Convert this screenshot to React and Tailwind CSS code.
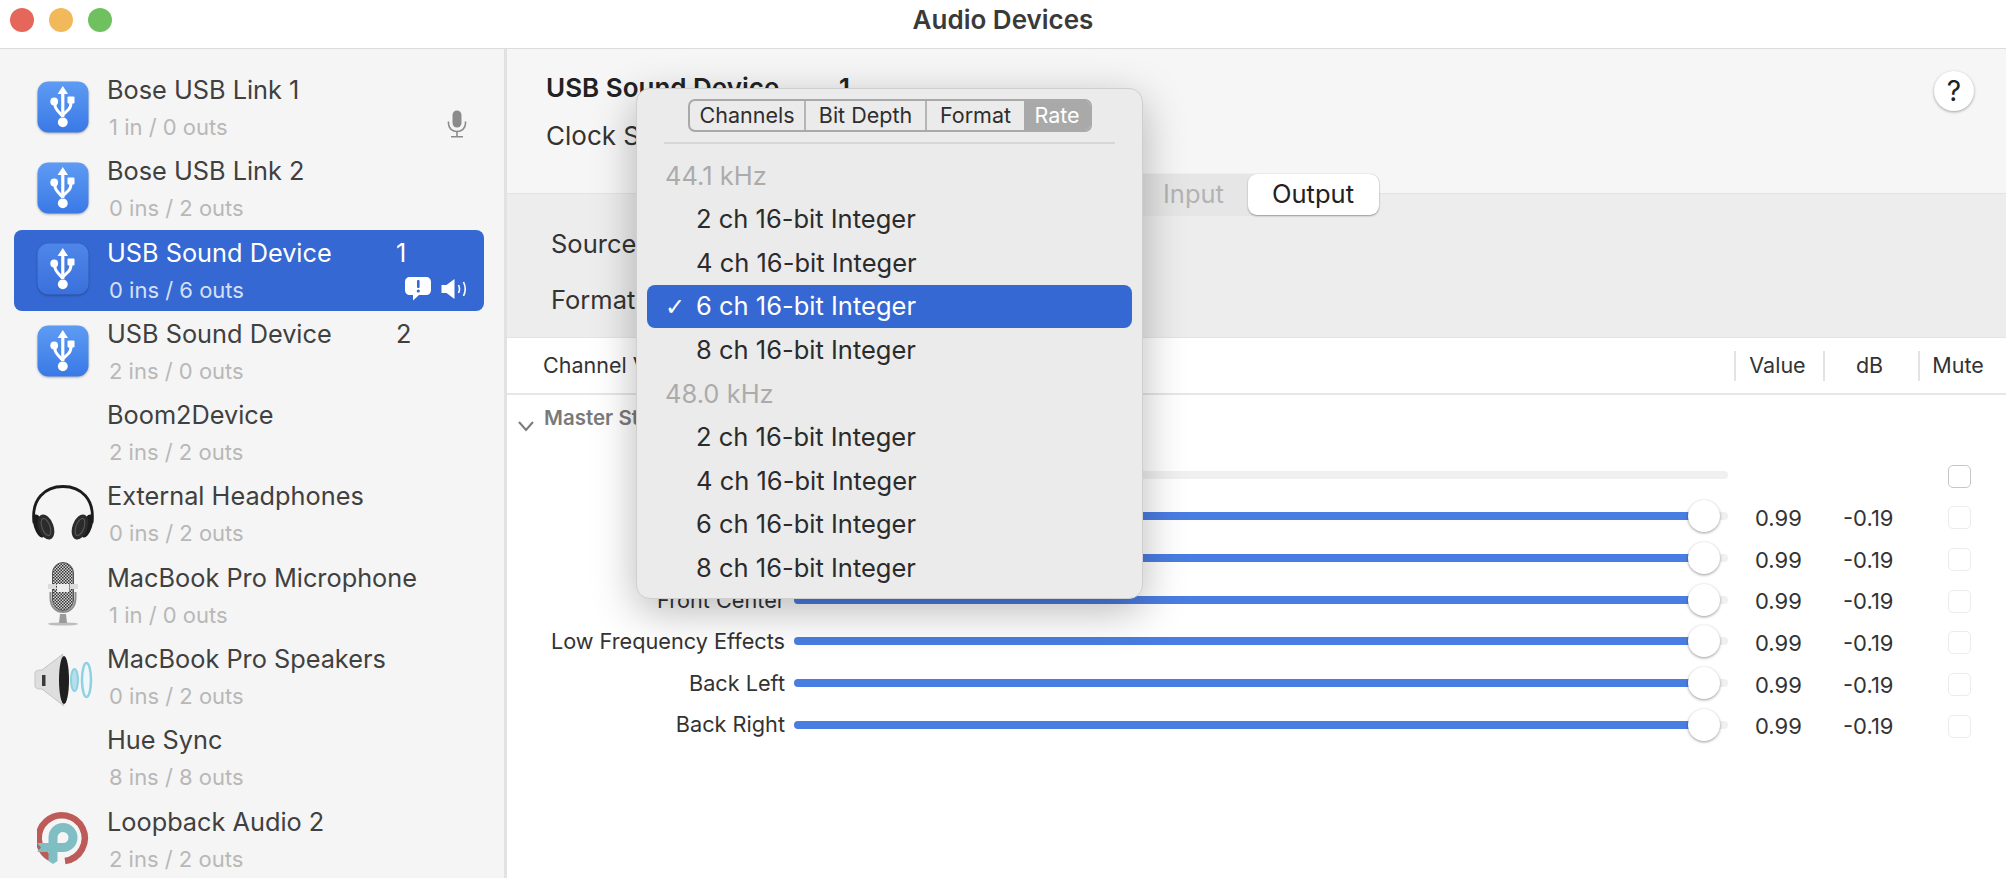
import { useId } from 'react'

const DEVICES = [
  { name: 'Bose USB Link 1', sub: '1 in / 0 outs', icon: 'usb', mic: true },
  { name: 'Bose USB Link 2', sub: '0 ins / 2 outs', icon: 'usb' },
  { name: 'USB Sound Device', sub: '0 ins / 6 outs', icon: 'usb', num: '1', selected: true },
  { name: 'USB Sound Device', sub: '2 ins / 0 outs', icon: 'usb', num: '2' },
  { name: 'Boom2Device', sub: '2 ins / 2 outs' },
  { name: 'External Headphones', sub: '0 ins / 2 outs', icon: 'headphones' },
  { name: 'MacBook Pro Microphone', sub: '1 in / 0 outs', icon: 'bigmic' },
  { name: 'MacBook Pro Speakers', sub: '0 ins / 2 outs', icon: 'speaker' },
  { name: 'Hue Sync', sub: '8 ins / 8 outs' },
  { name: 'Loopback Audio 2', sub: '2 ins / 2 outs', icon: 'loopback' },
]

const CHANNELS = ['Front Left', 'Front Right', 'Front Center', 'Low Frequency Effects', 'Back Left', 'Back Right']
const TABS = ['Channels', 'Bit Depth', 'Format', 'Rate']
const RATES = [
  { rate: '44.1 kHz', items: ['2 ch 16-bit Integer', '4 ch 16-bit Integer', '6 ch 16-bit Integer', '8 ch 16-bit Integer'], checked: 2 },
  { rate: '48.0 kHz', items: ['2 ch 16-bit Integer', '4 ch 16-bit Integer', '6 ch 16-bit Integer', '8 ch 16-bit Integer'] },
]

function UsbIcon({ selected }) {
  const id = useId()
  return (
    <svg width="52" height="52" viewBox="0 0 52 52" className="drop-shadow-[0_1px_1px_rgba(0,0,0,0.3)]">
      <defs>
        <linearGradient id={id} x1="0" y1="0" x2="0" y2="1">
          <stop offset="0" stopColor={selected ? '#4f86e8' : '#5e9bf3'} />
          <stop offset="1" stopColor={selected ? '#3a70dc' : '#3a79e6'} />
        </linearGradient>
      </defs>
      <rect x="0.5" y="0.5" width="51" height="51" rx="11" fill={`url(#${id})`} />
      <path d="M25.8 5 L31 13 H27.4 V36 H24.2 V13 H20.6 Z" fill="#fff" />
      <circle cx="25.8" cy="41.3" r="4.9" fill="#fff" />
      <circle cx="17.2" cy="20.5" r="3.9" fill="#fff" />
      <rect x="30.5" y="15.5" width="7" height="7" rx="1" fill="#fff" />
      <path d="M17.6 22 Q18 27 20.5 29.5 L25.8 35.5 M34 21 Q34 26 31.5 28.5 L25.8 34" stroke="#fff" strokeWidth="3" fill="none" />
    </svg>
  )
}

function HeadphonesIcon() {
  return (
    <svg width="64" height="56" viewBox="0 0 64 56">
      <path d="M3 38 C0 14 14 1.5 32 1.5 C50 1.5 64 14 61 38" fill="none" stroke="#1b1b1b" strokeWidth="2.8" />
      <ellipse cx="8" cy="41" rx="5" ry="12" transform="rotate(-18 8 41)" fill="#1c1c1c" />
      <ellipse cx="56" cy="41" rx="5" ry="12" transform="rotate(18 56 41)" fill="#1c1c1c" />
      <ellipse cx="15" cy="42" rx="7.5" ry="13" transform="rotate(-20 15 42)" fill="#2b2b2b" />
      <ellipse cx="49" cy="42" rx="7.5" ry="13" transform="rotate(20 49 42)" fill="#2b2b2b" />
      <ellipse cx="15" cy="42" rx="4" ry="9" transform="rotate(-20 15 42)" fill="none" stroke="#5c5c5c" strokeWidth="1" />
      <ellipse cx="49" cy="42" rx="4" ry="9" transform="rotate(20 49 42)" fill="none" stroke="#5c5c5c" strokeWidth="1" />
    </svg>
  )
}

function BigMicIcon() {
  const id = useId()
  return (
    <svg width="32" height="64" viewBox="0 0 32 64">
      <defs>
        <pattern id={id} width="3" height="3" patternUnits="userSpaceOnUse">
          <rect width="3" height="3" fill="#d8d8d8" />
          <rect width="1.5" height="1.5" fill="#333" />
          <rect x="1.5" y="1.5" width="1.5" height="1.5" fill="#333" />
        </pattern>
      </defs>
      <ellipse cx="16" cy="62" rx="15" ry="1.6" fill="#bdbdbd" />
      <path d="M13 52 H19 L20 61 H12 Z" fill="#9a9a9a" />
      <path d="M3.5 30 V36 C3.5 46 10 50 16 50 C22 50 28.5 46 28.5 36 V30" fill="none" stroke="#8f8f8f" strokeWidth="2" />
      <rect x="5.5" y="0.5" width="21" height="48" rx="10.5" fill={`url(#${id})`} stroke="#555" />
      <rect x="10" y="22" width="12" height="8" fill="#ededed" />
      <rect x="1" y="22" width="8" height="5" fill="#dcdcdc" />
      <rect x="23" y="22" width="8" height="5" fill="#dcdcdc" />
    </svg>
  )
}

function SpeakerIcon() {
  return (
    <svg width="60" height="54" viewBox="0 0 60 54">
      <path d="M2 20 C2 18 4 17 9 17 L30 1 C26 10 27 44 31 53 L9 36 C4 36 2 35 2 33 Z" fill="#dedede" stroke="#c4c4c4" />
      <rect x="9" y="22" width="3.5" height="11" fill="#3a3a3a" />
      <ellipse cx="31" cy="27" rx="5" ry="24" fill="#1f1f1f" />
      <ellipse cx="41.5" cy="27" rx="3.5" ry="11" fill="#b5e0ea" stroke="#8fd0e2" strokeWidth="2" />
      <ellipse cx="53.5" cy="27" rx="4.5" ry="17" fill="#eef8fb" stroke="#8fd0e2" strokeWidth="2.5" />
    </svg>
  )
}

function LoopbackIcon() {
  return (
    <svg width="53" height="54" viewBox="0 0 53 54">
      <path d="M13 47 A23 23 0 1 1 28 50" fill="none" stroke="#bd5b59" strokeWidth="6.5" />
      <path d="M26 12 A14.5 14.5 0 0 1 26 41 H0 L4 36.5 L0 32 H26 A5.5 5.5 0 0 0 26 21 A5.5 5.5 0 0 0 20.5 26 V32 H11.5 V26 A14.5 14.5 0 0 1 26 12 Z" fill="#7fbec3" />
      <path d="M11.5 41 H20.5 V50 L16 53 L11.5 50 Z" fill="#7fbec3" />
    </svg>
  )
}

function SmallMic() {
  return (
    <svg width="20" height="28" viewBox="0 0 20 28">
      <rect x="5.5" y="0.5" width="9" height="17" rx="4.5" fill="#8b8b8b" />
      <path d="M1.5 11.5 V13.5 C1.5 18.5 5.5 21.5 10 21.5 C14.5 21.5 18.5 18.5 18.5 13.5 V11.5" fill="none" stroke="#8b8b8b" strokeWidth="1.6" />
      <path d="M10 21.5 V26.5 M4 26.8 H16" stroke="#8b8b8b" strokeWidth="1.6" />
    </svg>
  )
}

function AlertBubble() {
  return (
    <svg width="26" height="24" viewBox="0 0 26 24">
      <path d="M5 0 H21 C24 0 26 2 26 5 V13 C26 16 24 18 21 18 H14 L8 23.5 V18 H5 C2 18 0 16 0 13 V5 C0 2 2 0 5 0 Z" fill="#fff" />
      <rect x="12" y="3" width="2.6" height="8" rx="1" fill="#3568d2" />
      <circle cx="13.3" cy="14" r="1.6" fill="#3568d2" />
    </svg>
  )
}

function SpeakerSmall() {
  return (
    <svg width="26" height="20" viewBox="0 0 25 20">
      <path d="M0 6 H5 L13 0 V20 L5 14 H0 Z" fill="#fff" />
      <path d="M17 6 Q19 10 17 14 M22 3 Q25.5 10 22 17" stroke="#fff" strokeWidth="1.6" fill="none" />
    </svg>
  )
}

function DeviceIcon({ icon, selected }) {
  if (icon === 'usb') return <UsbIcon selected={selected} />
  if (icon === 'headphones') return <HeadphonesIcon />
  if (icon === 'bigmic') return <BigMicIcon />
  if (icon === 'speaker') return <div className="mt-[8px]"><SpeakerIcon /></div>
  if (icon === 'loopback') return <LoopbackIcon />
  return null
}

function DeviceRow({ d }) {
  return (
    <div className={`flex h-[81.3px] w-[470px] rounded-[8px] pr-[17px] ${d.selected ? 'bg-[#3568d2]' : ''}`}>
      <div className="flex w-[93px] shrink-0 items-center justify-center pb-[2px] pl-[5px]">
        <DeviceIcon icon={d.icon} selected={d.selected} />
      </div>
      <div className="flex-1 pt-[9px]">
        <div className={`flex whitespace-nowrap text-[25.3px] leading-[28px] ${d.selected ? 'text-white' : 'text-[#404040]'}`}>
          <span className="w-[289px]">{d.name}</span>
          <span>{d.num}</span>
        </div>
        <div className="mt-[11px] flex h-[24px] items-center justify-between">
          <span className={`pl-[2px] text-[22px] leading-[24px] ${d.selected ? 'text-[#d5e0f6]' : 'text-[#b8b8b8]'}`}>{d.sub}</span>
          {d.mic && <div className="-mt-[7px]"><SmallMic /></div>}
          {d.selected && (
            <div className="-mt-[1px] flex items-center gap-[10px]">
              <AlertBubble />
              <SpeakerSmall />
            </div>
          )}
        </div>
      </div>
    </div>
  )
}

function ChannelRow({ label, muted, master }) {
  return (
    <div className="flex h-[41.67px] items-center">
      <div className="w-[278px] shrink-0 whitespace-nowrap text-right text-[21.7px] text-[#333]">{label}</div>
      <div className="relative ml-[9px] h-[8px] w-[934px] shrink-0 rounded-full bg-[#f0f0f0]">
        {!master && <div className="h-[8px] w-[900px] rounded-l-full bg-[#4a7de2]" />}
        {!master && (
          <div className="absolute left-[894px] top-[-12px] h-[32px] w-[32px] rounded-full bg-white shadow-[0_1px_3px_rgba(0,0,0,0.4)]" />
        )}
      </div>
      <div className="w-[95px] shrink-0 pl-[27px] pt-[4px] text-[22px] text-[#333]">{master ? '' : '0.99'}</div>
      <div className="w-[125px] shrink-0 pl-[20px] pt-[4px] text-[22px] text-[#333]">{master ? '' : '-0.19'}</div>
      <div className={`mt-[3px] h-[23px] w-[23px] shrink-0 rounded-[5px] border bg-white ${muted ? 'border-[#c6c6c6]' : 'border-[#ececec]'}`} />
    </div>
  )
}

function FormatPopup() {
  return (
    <div className="absolute left-[636px] top-[88px] z-10 h-[511px] w-[507px] rounded-[14px] border border-[#cfcfcf] bg-[#ebebeb] shadow-[0_12px_44px_rgba(0,0,0,0.28)]">
      <div className="ml-[51px] mt-[10px] flex h-[33px] w-[404px] overflow-hidden rounded-[7px] border-2 border-[#a9a9a9] text-[21.5px] text-[#2e2e2e]">
        <div className="flex w-[116px] items-center justify-center border-r-2 border-[#b5b5b5]">{TABS[0]}</div>
        <div className="flex w-[121px] items-center justify-center border-r-2 border-[#b5b5b5]">{TABS[1]}</div>
        <div className="flex w-[97px] items-center justify-center">{TABS[2]}</div>
        <div className="flex flex-1 items-center justify-center bg-[#a9a9a9] text-white">{TABS[3]}</div>
      </div>
      <div className="mx-[27px] mt-[10px] h-[2px] bg-[#d6d6d6]" />
      <div className="mt-[10px] px-[10px]">
        {RATES.map(group => (
          <div key={group.rate}>
            <div className="flex h-[43.6px] items-center pl-[18px] text-[25.5px] text-[#ababab]">{group.rate}</div>
            {group.items.map((item, i) => {
              const on = group.checked === i
              return (
                <div key={item} className={`flex h-[43.6px] items-center rounded-[8px] text-[25.5px] ${on ? 'bg-[#3568d2] text-white' : 'text-[#2b2b2b]'}`}>
                  <span className="w-[49px] pl-[18px] font-['DejaVu_Sans',sans-serif] text-[24px]">{on ? '✓' : ''}</span>
                  <span>{item}</span>
                </div>
              )
            })}
          </div>
        ))}
      </div>
    </div>
  )
}

export default function App() {
  return (
    <div className="relative flex h-screen flex-col overflow-hidden bg-white font-['Inter',sans-serif]">
      {/* title bar */}
      <div className="relative flex h-[49px] shrink-0 items-center justify-center border-b border-[#dcdcdc] pb-[10px]">
        <div className="absolute left-[10px] top-[8px] flex gap-[15px]">
          <div className="h-[24px] w-[24px] rounded-full bg-[#e5675b]" />
          <div className="h-[24px] w-[24px] rounded-full bg-[#f2b95a]" />
          <div className="h-[24px] w-[24px] rounded-full bg-[#6fc05e]" />
        </div>
        <span className="text-[26px] font-semibold text-[#3a3a3a]">Audio Devices</span>
      </div>

      <div className="flex min-h-0 flex-1">
        {/* device list */}
        <div className="w-[507px] shrink-0 border-r-[3px] border-[#e2e2e2] bg-[#f5f5f5] pl-[14px] pt-[18px]">
          {DEVICES.map((d, i) => <DeviceRow key={i} d={d} />)}
        </div>

        {/* detail pane */}
        <div className="min-w-0 flex-1">
          <div className="flex h-[144px] justify-between bg-[#f6f6f6] pl-[39px] pr-[32px]">
            <div>
              <div className="flex pt-[25px] text-[26px] font-semibold leading-[28px] text-[#222]">
                <span className="w-[293px]">USB Sound Device</span>
                <span>1</span>
              </div>
              <div className="mt-[20px] text-[26px] leading-[28px] text-[#333]">Clock Source:</div>
            </div>
            <div className="mt-[22px] flex h-[40px] w-[40px] items-center justify-center rounded-full bg-white text-[28px] text-[#222] shadow-[0_1px_3px_rgba(0,0,0,0.35)]">?</div>
          </div>

          <div className="h-[145px] border-y border-[#e4e4e4] bg-[#ededed] pl-[44px]">
            <div className="flex h-[41px] -translate-y-[20px] justify-center pr-[44px]">
              <div className="flex h-[41px] w-[244px] rounded-[9px] bg-[#e6e6e6] shadow-[0_0_1px_rgba(0,0,0,0.3)]">
                <div className="flex w-[113px] items-center justify-center pl-[5px] text-[25.5px] text-[#b3b3b3]">Input</div>
                <div className="flex w-[131px] items-center justify-center rounded-[9px] bg-white text-[25.5px] text-[#222] shadow-[0_1px_2px_rgba(0,0,0,0.35)]">Output</div>
              </div>
            </div>
            <div className="-mt-[5px] text-[25.5px] leading-[28px] text-[#333]">Source:</div>
            <div className="mt-[28px] text-[25.5px] leading-[28px] text-[#333]">Format:</div>
          </div>

          <div className="flex h-[57px] items-center border-b-2 border-[#e6e6e6] text-[21.5px] text-[#333]">
            <div className="w-[1227px] shrink-0 whitespace-nowrap pl-[36px]">Channel Volume</div>
            <div className="flex h-[30px] w-[89px] shrink-0 items-center justify-center border-l-2 border-[#e3e3e3] pr-[4px]">Value</div>
            <div className="flex h-[30px] w-[95px] shrink-0 items-center justify-center border-l-2 border-[#e3e3e3] pr-[4px]">dB</div>
            <div className="flex h-[30px] w-[80px] shrink-0 items-center justify-center border-l-2 border-[#e3e3e3] pr-[2px]">Mute</div>
          </div>

          <div className="flex h-[59px] items-start pl-[10px] pt-[8px] text-[20.5px] font-semibold text-[#7a7a7a]">
            <svg width="18" height="12" viewBox="0 0 18 12" className="mt-[17px]">
              <path d="M2 2 L9 10 L16 2" fill="none" stroke="#7a7a7a" strokeWidth="2" />
            </svg>
            <span className="ml-[9px]">Master Stream</span>
          </div>

          <ChannelRow label="Master" muted master />
          {CHANNELS.map(c => <ChannelRow key={c} label={c} />)}
        </div>
      </div>

      <FormatPopup />
    </div>
  )
}
